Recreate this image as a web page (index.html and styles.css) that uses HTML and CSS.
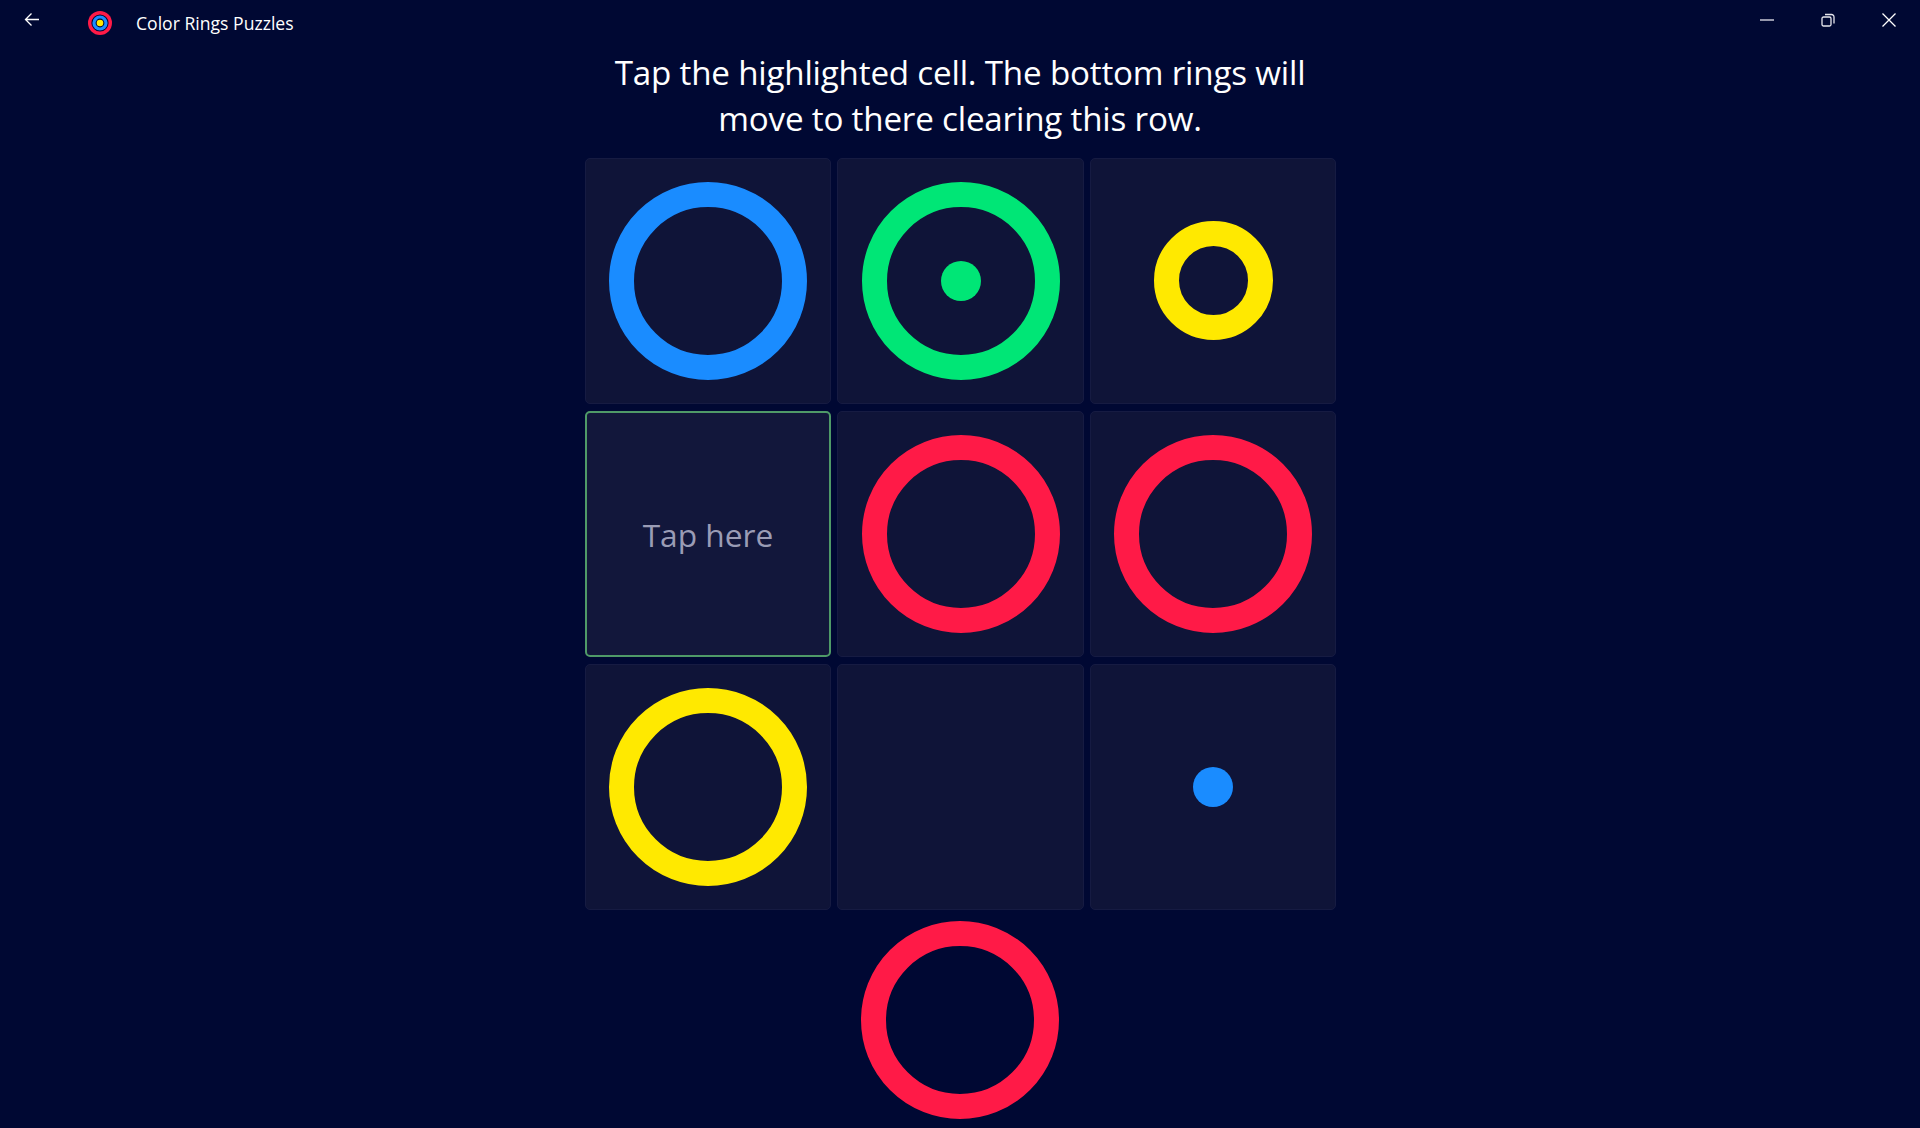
FILE: index.html
```html
<!DOCTYPE html>
<html lang="en">
<head>
<meta charset="utf-8">
<title>Color Rings Puzzles</title>
<link rel="stylesheet" href="styles.css">
</head>
<body>
<div class="app">
  <header class="titlebar">
    <div class="title-left">
      <svg class="back" viewBox="0 0 16 16" width="16" height="16"><path d="M15 7.5H1.5M7.500 1.500 1.500 7.500l6 6" fill="none" stroke="#fff" stroke-width="1.300"/></svg>
      <svg class="logo" viewBox="0 0 24 24" width="24" height="24"><circle cx="12" cy="12" r="12" fill="#ff1a47"/><circle cx="12" cy="12" r="8.600" fill="#000833"/><circle cx="12" cy="12" r="7.600" fill="#1a8cff"/><circle cx="12" cy="12" r="4.400" fill="#000833"/><circle cx="12" cy="12" r="3.300" fill="#ffe900"/></svg>
      <span class="app-name">Color Rings Puzzles</span>
    </div>
    <div class="window-controls">
      <svg viewBox="0 0 14 14" width="14" height="14"><path d="M0 7H14" stroke="#e6e7ee" stroke-width="1.300" fill="none"/></svg>
      <svg viewBox="0 0 14 14" width="14" height="14"><path d="M1 5.500a1.500 1.500 0 0 1 1.500-1.500h6A1.500 1.500 0 0 1 10 5.500v6A1.500 1.500 0 0 1 8.500 13h-6A1.500 1.500 0 0 1 1 11.500zM4 1.500h6.500a2.500 2.500 0 0 1 2.500 2.500v6.500" stroke="#e6e7ee" stroke-width="1.300" fill="none"/></svg>
      <svg viewBox="0 0 14 14" width="14" height="14"><path d="M.5.500l13 13M13.500.500l-13 13" stroke="#fff" stroke-width="1.300" fill="none"/></svg>
    </div>
  </header>
  <main class="board">
    <h1 class="prompt">Tap the highlighted cell. The bottom rings will<br>move to there clearing this row.</h1>
    <div class="grid">
      <div class="cell"><div class="ring large blue"></div></div>
      <div class="cell"><div class="ring large green"></div><div class="dot green-dot"></div></div>
      <div class="cell"><div class="ring medium yellow"></div></div>
      <div class="cell target"><span class="tap">Tap here</span></div>
      <div class="cell"><div class="ring large red"></div></div>
      <div class="cell"><div class="ring large red"></div></div>
      <div class="cell"><div class="ring large yellow"></div></div>
      <div class="cell"></div>
      <div class="cell"><div class="dot blue-dot"></div></div>
    </div>
    <div class="next"><div class="ring large red"></div></div>
  </main>
</div>
</body>
</html>
```
FILE: styles.css
```css
* { box-sizing: border-box; }
html, body { margin: 0; height: 100%; }
body {
  background: #000833;
  color: #fff;
  font-family: "Open Sans", "Noto Sans", sans-serif;
  overflow: hidden;
}
.app { height: 1128px; display: flex; flex-direction: column; }
.titlebar {
  height: 44px;
  flex: none;
  display: flex;
  justify-content: space-between;
  align-items: flex-start;
}
.title-left { display: flex; align-items: center; height: 46px; padding-left: 24px; }
.back { margin-top: -7px; }
.logo { margin-left: 48px; }
.app-name { margin-left: 24px; font-size: 17.6px; color: #fff; }
.window-controls { display: flex; gap: 47px; padding: 13px 24px 0 0; }
.board { display: flex; flex-direction: column; align-items: center; }
.prompt {
  margin: 5.5px 0 0;
  font-size: 33.2px;
  line-height: 46px;
  font-weight: 400;
  letter-spacing: -0.2px;
  text-align: center;
}
.grid {
  margin: 16px 0 0 1px;
  display: grid;
  grid-template-columns: repeat(3, 246.5px);
  grid-template-rows: repeat(3, 246.5px);
  gap: 6.5px 6px;
}
.cell {
  background: #0f1438;
  border: 1px solid #161b42;
  border-radius: 5px;
  display: grid;
  place-items: center;
}
.cell > * { grid-area: 1 / 1; }
.cell.target { background: #12173b; border: 2px solid #4f9a68; }
.tap { font-size: 31.7px; font-weight: 400; color: #9a9cb5; position: relative; top: 1px; }
.ring { border-radius: 50%; border-style: solid; border-width: 25px; }
.ring.large { width: 198px; height: 198px; }
.ring.medium { width: 119px; height: 119px; }
.blue { border-color: #1a8cff; }
.green { border-color: #00e676; }
.yellow { border-color: #ffe900; }
.red { border-color: #ff1a47; }
.dot { width: 40px; height: 40px; border-radius: 50%; }
.green-dot { background: #00e676; }
.blue-dot { background: #1a8cff; }
.next { margin-top: 11px; }
```
